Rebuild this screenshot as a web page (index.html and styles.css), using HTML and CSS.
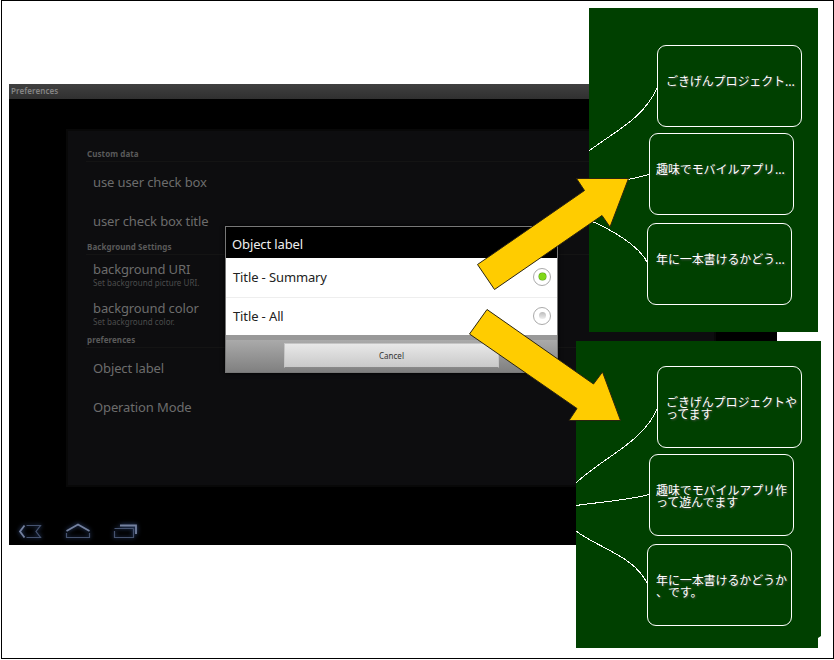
FILE: index.html
```html
<!DOCTYPE html>
<html lang="ja">
<head>
<meta charset="utf-8">
<title>Preferences</title>
<link rel="stylesheet" href="styles.css">
</head>
<body>
<div class="canvas">
  <section class="screen">
    <header class="status">Preferences</header>
    <main class="prefs">
      <h2 class="category">Custom data</h2>
      <div class="pref"><span class="name">use user check box</span></div>
      <div class="pref"><span class="name">user check box title</span></div>
      <h2 class="category">Background Settings</h2>
      <div class="pref"><span class="name">background URI</span><span class="hint">Set background picture URI.</span></div>
      <div class="pref"><span class="name">background color</span><span class="hint">Set background color.</span></div>
      <h2 class="category">preferences</h2>
      <div class="pref"><span class="name">Object label</span></div>
      <div class="pref"><span class="name">Operation Mode</span></div>
    </main>
    <nav class="navbar">
      <svg class="icon" width="32" height="24" viewBox="0 0 32 24"><path class="dim" d="M12.500 5.500H26.500L22 11.500L26.500 17.500H12.500"/><path class="lit" d="M10.500 5.500L6 11.500L10.500 17.500"/></svg>
      <svg class="icon" width="32" height="24" viewBox="0 0 32 24"><path class="dim" d="M4.500 13V17.500H27.500V13"/><path class="lit" d="M4.500 11L16 4.500L27.500 11"/></svg>
      <svg class="icon" width="32" height="24" viewBox="0 0 32 24"><path class="dim" d="M4.500 11V17.500H23.500V8.500M4.500 8.500H23.500"/><path class="lit" d="M10 5.500H26V14"/></svg>
    </nav>
  </section>

  <section class="dialog">
    <h1 class="dialog-title">Object label</h1>
    <div class="option"><span>Title - Summary</span><i class="radio on"></i></div>
    <div class="option"><span>Title - All</span><i class="radio"></i></div>
    <footer class="actions"><button class="cancel">Cancel</button></footer>
  </section>

  <section class="map short">
    <svg class="links" width="229" height="324" viewBox="589 8 229 324"><path d="M589 151C613 132 643 120 657.500 87M620 181L635 178L649 174.500M589 220C610 229 639 245 647.500 263"/></svg>
    <div class="node a">ごきげんプロジェクト...</div>
    <div class="node b">趣味でモバイルアプリ...</div>
    <div class="node c">年に一本書けるかどう...</div>
  </section>

  <section class="map full">
    <svg class="links" width="245" height="307" viewBox="576 341 245 307"><path d="M576 483C603 457 643 443 657.500 408M576 505.500C600 502 630 500 649 494.500M576 531C596 547 635 556 647.500 584"/></svg>
    <div class="node a">ごきげんプロジェクトや<br>ってます</div>
    <div class="node b">趣味でモバイルアプリ作<br>って遊んでます</div>
    <div class="node c">年に一本書けるかどうか<br>、です。</div>
  </section>

  <svg class="arrows" width="834" height="660" viewBox="0 0 834 660">
    <path d="M477.500 264.500L584.500 190.500L576.500 178.500H628.500L610 227L602 215.500L494.500 289.500Z"/>
    <path d="M487 309.500L593.500 384L602.500 372L620.500 420.500H569L577 408.500L469.500 334Z"/>
  </svg>
</div>
</body>
</html>
```
FILE: styles.css
```css
*, *::before { box-sizing: border-box; }
body { margin: 0; background: #fff; font-family: "Noto Sans", "Open Sans", sans-serif; }
h1, h2 { margin: 0; font-weight: 400; }

.canvas { position: relative; width: 834px; height: 660px; overflow: hidden; background: #fff; }
.canvas::before { content: ""; position: absolute; left: 1px; top: 0; width: 833px; height: 659px; border: 1px solid #000; }

.screen { position: absolute; left: 9px; top: 84px; width: 768px; height: 461px; background: #000; display: flex; flex-direction: column; }
.status { height: 15px; padding-left: 2px; background: linear-gradient(#404040, #303030); color: #858585; font-size: 8px; font-weight: 600; line-height: 14px; letter-spacing: 0.1px; }
.prefs { width: 650px; height: 358px; margin: 30px 0 0 57px; padding: 15px 18px; border: 2px solid #080808; background: #0d0d0f; }
.category { height: 16px; padding-left: 1px; border-bottom: 1px solid #141414; color: #5a5a5a; font-size: 8px; font-weight: 700; line-height: 15px; letter-spacing: 0.08px; }
.category ~ .category { height: 15px; line-height: 13px; }
.pref { height: 39px; padding-left: 7px; display: flex; flex-direction: column; justify-content: center; }
.name { color: #6c6c6c; font-size: 13px; line-height: 16px; letter-spacing: -0.12px; }
.hint { color: #4c4c4c; font-size: 8px; line-height: 11px; letter-spacing: 0.04px; }
.navbar { display: flex; gap: 16px; margin-top: 33px; padding-left: 5px; }
.icon { fill: none; filter: drop-shadow(0 0 2px #36538c); }
.dim { stroke: #46536f; stroke-width: 1.2; }
.lit { stroke: #74819f; stroke-width: 1.8; }

.dialog { position: absolute; left: 225px; top: 226px; width: 333px; height: 147px; border: 1px solid #777; background: #fff; box-shadow: 0 0 4px #000; display: flex; flex-direction: column; }
.dialog-title { height: 31px; padding-left: 6px; background: #000; color: #eee; font-size: 13px; line-height: 34px; letter-spacing: -0.12px; }
.option { height: 39px; padding: 0 6px 2px 7px; display: flex; align-items: center; justify-content: space-between; color: #222; font-size: 13px; line-height: 20px; letter-spacing: -0.12px; }
.option + .option { height: 38px; border-top: 1px solid #eee; }
.option span { padding-top: 1px; }
.radio { display: grid; place-items: center; width: 18px; height: 18px; border: 1px solid #aaa; border-radius: 50%; background: #fff; }
.radio::before { content: ""; width: 7px; height: 7px; border-radius: 50%; background: linear-gradient(#bbb, #eee); }
.radio.on::before { background: #80d818; box-shadow: 0 0 0 0.500px #5c9d21; }
.actions { flex: 1; border-top: 5px solid #999; background: linear-gradient(#aaa, #808080); display: flex; justify-content: center; padding: 3px 0 4px; }
.cancel { width: 215px; padding: 0; border: 1px solid #c5c5c5; border-bottom-color: #888; background: linear-gradient(#e8e8e8, #c9c9c9); color: #333; font: 8px "Noto Sans", sans-serif; }

.map { position: absolute; background: #004000; }
.short { left: 589px; top: 8px; width: 229px; height: 324px; }
.full { left: 576px; top: 341px; width: 245px; height: 307px; clip-path: polygon(0 0, 100% 0, 100% 295px, 242px 297px, 242px 100%, 0 100%); }
.links { display: block; fill: none; stroke: #fff; stroke-width: 1; shape-rendering: crispEdges; }
.node { position: absolute; width: 145px; height: 82px; padding-top: 29px; border: 1px solid #fff; border-radius: 9px; color: #fff; font: 12px/12px "Noto Sans CJK JP", sans-serif; letter-spacing: -0.1px; white-space: nowrap; text-shadow: 1px 1px 2px #555; }
.a { padding-left: 8px; }
.b { padding-left: 6px; }
.c { padding-left: 8px; }
.short .a { left: 68px; top: 37px; }
.short .b { left: 60px; top: 125px; }
.short .c { left: 58px; top: 215px; }
.full .a { left: 81px; top: 25px; }
.full .b { left: 73px; top: 113px; }
.full .c { left: 71px; top: 203px; }

.arrows { position: absolute; left: 0; top: 0; fill: #fc0; stroke: #2b2410; stroke-width: 1; }
```
